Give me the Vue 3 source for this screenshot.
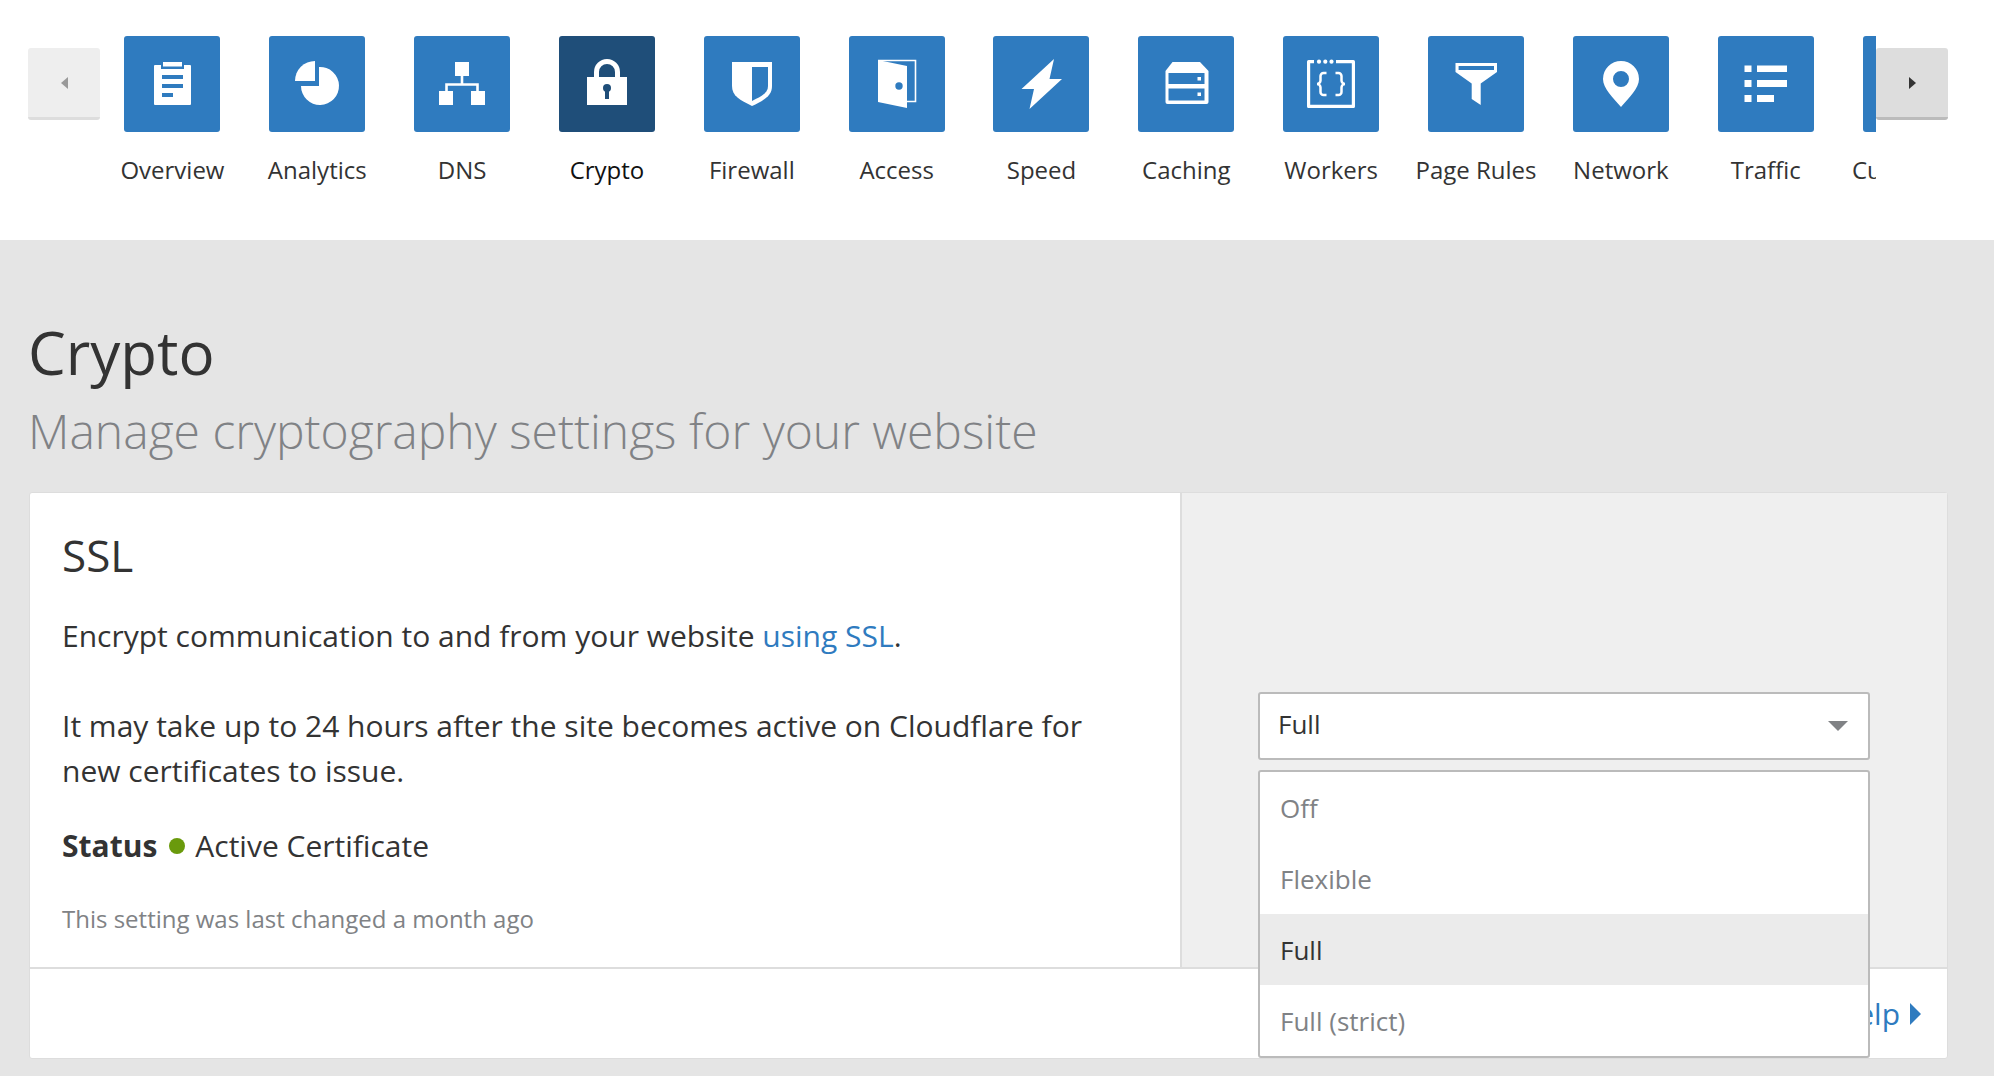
<template>
  <div class="page">
    <nav class="top-nav">
      <button class="nav-btn prev"><span class="tri-left"></span></button>
      <div class="nav-scroll">
        <a v-for="item in navItems" :key="item.label" class="nav-item" :class="{ active: item.label === 'Crypto' }">
          <span class="nav-icon">
            <svg v-if="item.icon" viewBox="0 0 96 96" width="96" height="96" v-html="item.icon"></svg>
          </span>
          <span class="nav-label">{{ item.label }}</span>
        </a>
      </div>
      <button class="nav-btn next"><span class="tri-right"></span></button>
    </nav>

    <main class="content">
      <h1>Crypto</h1>
      <p class="subtitle">Manage cryptography settings for your website</p>

      <section class="card">
        <div class="card-body">
          <div class="card-main">
            <h2>SSL</h2>
            <p class="first">Encrypt communication to and from your website <a class="link">using SSL</a>.</p>
            <p class="second">It may take up to 24 hours after the site becomes active on Cloudflare for new certificates to issue.</p>
            <p class="status"><strong>Status</strong><span class="dot"></span>Active Certificate</p>
            <p class="changed">This setting was last changed a month ago</p>
          </div>
          <div class="card-side">
            <div class="select-wrap">
              <div class="select">
                <span>Full</span>
                <span class="caret"></span>
              </div>
              <ul class="menu">
                <li v-for="opt in options" :key="opt" :class="{ selected: opt === 'Full' }">{{ opt }}</li>
              </ul>
            </div>
          </div>
        </div>
        <div class="card-footer">
          <a class="link help">Help<span class="help-arrow"></span></a>
        </div>
      </section>
    </main>
  </div>
</template>

<script setup>
const B = '#2f7bbf'
const D = '#1f4e79'

const navItems = [
  {
    label: 'Overview',
    icon: `<path fill="#fff" d="M31 29h6v4h23v-4h6a1 1 0 0 1 1 1v38a1 1 0 0 1-1 1H31a1 1 0 0 1-1-1V30a1 1 0 0 1 1-1z"/><rect x="39" y="26" width="19" height="4.500" fill="#fff"/><path fill="${B}" d="M38 39h21v4H38zM38 48h21v4H38zM38 57h11v4H38z"/>`
  },
  {
    label: 'Analytics',
    icon: `<path fill="#fff" d="M46 25A20 20 0 0 0 26 45H46Z"/><path fill="#fff" d="M50 31A19 19 0 1 1 32 50H50Z"/>`
  },
  {
    label: 'DNS',
    icon: `<path fill="#fff" d="M41 26h14v14H41zM25 55h14v14H25zM57 55h14v14H57z"/><path fill="none" stroke="#fff" stroke-width="2.600" d="M48 40v8.500M32.500 55v-6.500h31V55"/>`
  },
  {
    label: 'Crypto',
    icon: `<path fill="none" stroke="#fff" stroke-width="5" d="M37.500 42V36a10.500 10.500 0 0 1 21 0v6"/><path fill="#fff" d="M28 41h40v28H28z"/><circle cx="48" cy="52" r="4" fill="${D}"/><path fill="${D}" d="M46 52h4v11h-4z"/>`
  },
  {
    label: 'Firewall',
    icon: `<path fill="#fff" d="M28 26H68V50C68 60 60 64 48 70C36 64 28 60 28 50Z"/><path fill="${B}" d="M48 31H64V50C64 57 58 60 48 65Z"/>`
  },
  {
    label: 'Access',
    icon: `<path fill="#fff" d="M29 24L58 30V72L29 66Z"/><path fill="none" stroke="#fff" stroke-width="1.600" d="M29 24.500H66.500V65.500H58"/><circle cx="50" cy="50" r="3.700" fill="${B}"/>`
  },
  {
    label: 'Speed',
    icon: `<path fill="#fff" d="M61 23L56.500 43H69L36.500 73L41 53H28.500Z"/>`
  },
  {
    label: 'Caching',
    icon: `<path fill="#fff" d="M34.500 26H62L70.500 35V66a2 2 0 0 1-2 2H29.500a2 2 0 0 1-2-2V35Z"/><path fill="${B}" d="M30.500 37h36v11h-36zM30.500 52.500h36v12h-36z"/><path fill="#fff" d="M59.500 41h3.500v3.500h-3.500zM59.500 56.500h3.500V60h-3.500z"/>`
  },
  {
    label: 'Workers',
    icon: `<path fill="none" stroke="#fff" stroke-width="3.200" stroke-linejoin="round" d="M31 25.700H25.600V70.400H70.400V25.700H53"/><g fill="#fff"><circle cx="36" cy="25.700" r="2.100"/><circle cx="42.300" cy="25.700" r="2.100"/><circle cx="48.500" cy="25.700" r="2.100"/></g><path fill="none" stroke="#fff" stroke-width="2.500" d="M43.500 37h-3a3 3 0 0 0-3 3v4.500a3.500 3.500 0 0 1-3.500 3.500 3.500 3.500 0 0 1 3.500 3.500V56a3 3 0 0 0 3 3h3M52.500 37h3a3 3 0 0 1 3 3v4.500a3.500 3.500 0 0 0 3.500 3.500 3.500 3.500 0 0 0-3.500 3.500V56a3 3 0 0 1-3 3h-3"/>`
  },
  {
    label: 'Page Rules',
    icon: `<path fill="#fff" d="M27.500 27H69V36L52.700 47.500V69L43.700 63V47.500L27.500 36Z"/><path fill="${B}" d="M30.600 30H66V34H30.600z"/>`
  },
  {
    label: 'Network',
    icon: `<path fill="#fff" fill-rule="evenodd" d="M48 25A18 18 0 0 1 66 43C66 52 56 62 48 71C40 62 30 52 30 43A18 18 0 0 1 48 25ZM48 35A8 8 0 1 0 48 51A8 8 0 1 0 48 35Z"/>`
  },
  {
    label: 'Traffic',
    icon: `<path fill="#fff" d="M26.500 29.500h7V36h-7zM26.500 44h7v7h-7zM26.500 59h7v7h-7zM39 29.500h30V36H39zM39 44h30v7H39zM39 59h17v7H39z"/>`
  },
  { label: 'Customize', icon: '' }
]

const options = ['Off', 'Flexible', 'Full', 'Full (strict)']
</script>

<style>
html,
body {
  margin: 0;
  background: #e5e5e5;
}
</style>

<style scoped>
.page {
  min-height: 1076px;
  font-family: "Open Sans", sans-serif;
  color: #333;
  overflow: hidden;
}

.top-nav {
  display: flex;
  height: 240px;
  padding: 36px 46px 0 28px;
  box-sizing: border-box;
  background: #fff;
}

.nav-btn {
  flex: 0 0 72px;
  height: 72px;
  margin-top: 12px;
  padding: 0;
  border: 0;
  border-radius: 3px;
  display: flex;
  align-items: center;
  justify-content: center;
}

.prev {
  background: #eee;
  border-bottom: 3px solid #ddd;
}

.next {
  background: #ddd;
  border-bottom: 3px solid #bbb;
}

.tri-left {
  border-style: solid;
  border-width: 6px 7px 6px 0;
  border-color: transparent #999 transparent transparent;
}

.tri-right {
  border-style: solid;
  border-width: 6px 0 6px 7px;
  border-color: transparent transparent transparent #333;
}

.nav-scroll {
  flex: 1;
  display: flex;
  overflow: hidden;
  min-width: 0;
}

.nav-item {
  flex: 0 0 144.85px;
  display: flex;
  flex-direction: column;
  align-items: center;
}

.nav-icon {
  width: 96px;
  height: 96px;
  flex: none;
  border-radius: 3px;
  background: #2f7bbf;
}

.nav-icon svg {
  display: block;
}

.active .nav-icon {
  background: #1f4e79;
}

.nav-label {
  margin-top: 20px;
  font-size: 24px;
  line-height: 36px;
  white-space: nowrap;
}

.active .nav-label {
  color: #111;
}

.content {
  padding: 70px 46px 0 29px;
}

h1 {
  margin: 0 0 0 -1px;
  font-size: 60px;
  font-weight: 400;
  line-height: 84px;
}

.subtitle {
  margin: 1px 0 25px -1px;
  font-size: 48px;
  font-weight: 300;
  line-height: 72px;
  color: #808285;
}

.card {
  border: 1px solid #ddd;
  border-radius: 3px;
  background: #fff;
}

.card-body {
  display: flex;
  height: 474px;
  border-bottom: 2px solid #ddd;
}

.card-main {
  flex: 0 0 1152px;
  box-sizing: border-box;
  padding: 32px 32px 0;
  font-size: 30px;
  line-height: 45px;
  border-right: 2px solid #ddd;
}

.card-main p {
  margin: 0;
}

h2 {
  margin: 0;
  font-size: 44px;
  font-weight: 400;
  line-height: 60px;
}

.card-main .first {
  margin-top: 28px;
}

.card-main .second {
  margin-top: 45px;
}

.card-main .status {
  margin-top: 30px;
  display: flex;
  align-items: center;
}

.status strong {
  font-weight: 700;
}

.dot {
  width: 16px;
  height: 16px;
  margin: 0 10px 0 12px;
  border-radius: 50%;
  background: #6a9a0c;
}

.card-main .changed {
  margin-top: 33px;
  font-size: 24px;
  line-height: 36px;
  color: #808285;
}

.link {
  color: #2f7bbf;
}

.card-side {
  flex: 1;
  padding: 199px 77px 0 76px;
  background: #efefef;
}

.select-wrap {
  position: relative;
}

.select {
  height: 68px;
  box-sizing: border-box;
  padding: 0 20px 0 18px;
  display: flex;
  align-items: center;
  justify-content: space-between;
  background: #fff;
  border: 2px solid #bbb;
  border-radius: 3px;
  font-size: 26px;
}

.select span:first-child {
  margin-top: -4px;
}

.caret {
  border-style: solid;
  border-width: 10px 10px 0;
  border-color: #808285 transparent transparent;
}

.menu {
  position: absolute;
  left: 0;
  right: 0;
  top: 78px;
  z-index: 2;
  margin: 0;
  padding: 0;
  list-style: none;
  background: #fff;
  border: 2px solid #bbb;
  border-radius: 3px;
  font-size: 26px;
  color: #808285;
}

.menu li {
  height: 71px;
  line-height: 72px;
  padding: 0 20px;
}

.menu .selected {
  background: #ebebeb;
  color: #333;
}

.card-footer {
  height: 89px;
  display: flex;
  align-items: center;
  justify-content: flex-end;
  padding: 0 26px 0 0;
  font-size: 30px;
}

.help {
  display: flex;
  align-items: center;
}

.help-arrow {
  margin-left: 10px;
  border-style: solid;
  border-width: 11px 0 11px 11px;
  border-color: transparent transparent transparent #2f7bbf;
}
</style>
